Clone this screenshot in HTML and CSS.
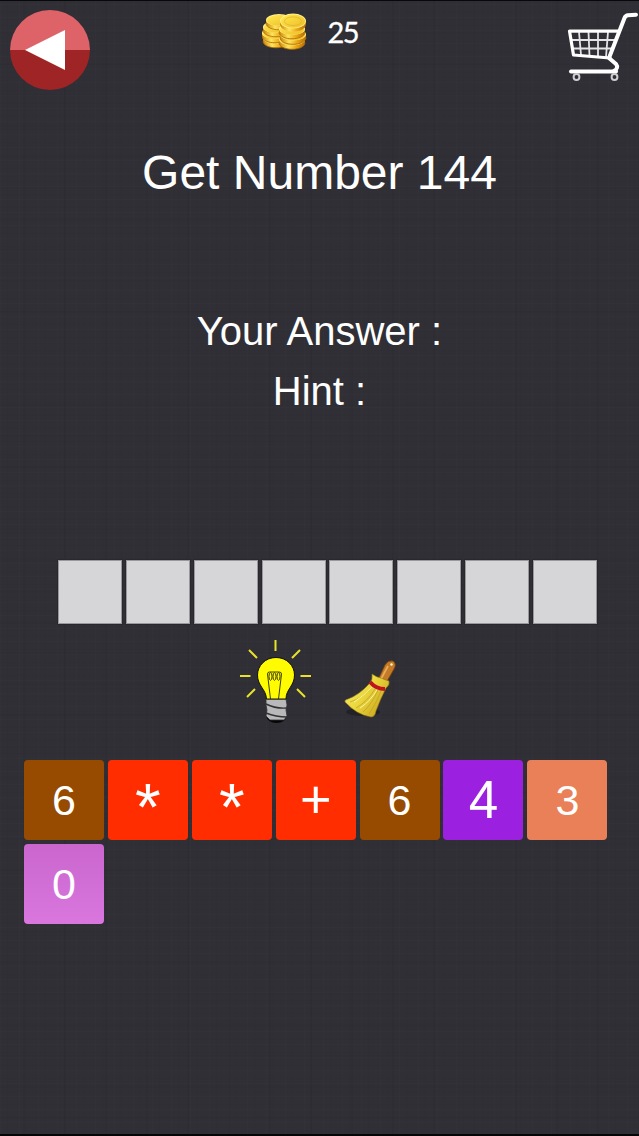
FILE: index.html
```html
<!DOCTYPE html>
<html lang="en">
  <head>
    <meta charset="UTF-8" />
    <meta name="viewport" content="width=device-width, initial-scale=1.0" />
    <title>Get Number</title>

    <link rel="stylesheet" href="styles.css">
  </head>

  <body>
    <div class="top">
      <svg class="back" viewBox="0 0 80 80">
        <path d="M0 40a40 40 0 0 1 80 0z" fill="#dd6368" />
        <path d="M0 40a40 40 0 0 0 80 0z" fill="#9f2426" />
        <path d="M15 40L55 20V60z" fill="#fff" />
      </svg>
      <div class="coins">
        <svg width="46" height="38" viewBox="0 0 46 38">
          <defs>
            <linearGradient id="edge">
              <stop offset="0" stop-color="#c98208" />
              <stop offset=".35" stop-color="#ffe45c" />
              <stop offset=".65" stop-color="#eba817" />
              <stop offset="1" stop-color="#b86c05" />
            </linearGradient>
            <linearGradient id="face" x2="1" y2="1">
              <stop offset="0" stop-color="#ffe94e" />
              <stop offset="1" stop-color="#edbc27" />
            </linearGradient>
            <g id="coin">
              <path d="M0 6v3c0 9 26 9 26 0v-3z" fill="url(#edge)" />
              <path d="M0 9c0 9 26 9 26 0" fill="none" stroke="#a96808" stroke-width=".8" />
              <ellipse cx="13" cy="6" rx="13" ry="6" fill="#fff08a" />
              <ellipse cx="13" cy="6.400" rx="12" ry="5.300" fill="url(#face)" />
            </g>
          </defs>
          <use href="#coin" x="1" y="19" />
          <use href="#coin" x="0" y="14" />
          <use href="#coin" x="1" y="8" />
          <use href="#coin" x="4" y="1" />
          <use href="#coin" x="17" y="20.500" />
          <use href="#coin" x="18" y="15.500" />
          <use href="#coin" x="17" y="10" />
          <g transform="translate(18 0)">
            <path d="M0 8v3c0 10 26 10 26 0v-3z" fill="url(#edge)" />
            <ellipse cx="13" cy="8" rx="13" ry="7.500" fill="#fff08a" />
            <ellipse cx="13" cy="8.200" rx="12" ry="6.600" fill="url(#face)" />
            <ellipse cx="13" cy="8.200" rx="8.500" ry="4.300" fill="none" stroke="#e4b528" stroke-width=".8" />
          </g>
        </svg>
        <span id="text-coin">25</span>
      </div>
      <svg class="cart" viewBox="0 0 74 70" fill="none" stroke="#fff">
        <path d="M4 19.500H54M5 28H51M6 36.500H48M14 20l2 23M23.500 20l1 24M33 20v24M43 20l-2 25" stroke-width="1.800" stroke="#e4e4e6" />
        <path d="M53 19H4.500L8.500 43L45 46" stroke-width="3.200" stroke-linejoin="round" stroke-linecap="round" />
        <path d="M44 46L59.500 6Q60.500 3.500 63 3.300L71 2.700M44 46L51 52Q54 56 49 59" stroke-width="4" stroke-linecap="round" stroke-linejoin="round" />
        <path d="M6 59.500H51" stroke-width="4" stroke-linecap="round" />
        <circle cx="11.500" cy="65" r="2.900" stroke-width="2" stroke="#cfcfd2" />
        <circle cx="49.500" cy="65" r="2.900" stroke-width="2" stroke="#cfcfd2" />
      </svg>
    </div>

    <h1>Get Number 144</h1>
    <div class="info">
      <p>Your Answer :</p>
      <p>Hint :</p>
    </div>

    <div class="slots">
      <div class="slot"></div>
      <div class="slot"></div>
      <div class="slot"></div>
      <div class="slot"></div>
      <div class="slot"></div>
      <div class="slot"></div>
      <div class="slot"></div>
      <div class="slot"></div>
    </div>

    <div class="tools">
      <svg class="bulb" viewBox="0 0 72 84">
        <path d="M35.500 0v11M9 10l8 8M60 10l-8 8M0 36h10.500M60.500 36h10.500M7 57l8-8M57 49l8 8" stroke="#e8e32a" stroke-width="2" />
        <path d="M26 76h21q-2 7-10.500 7T26 76z" fill="#050505" />
        <path d="M26 59h20l1 6-1 5 1 6-3 4H30l-4-4 1-6-1-5z" fill="#b9b9bb" stroke="#333" stroke-width=".8" />
        <path d="M26 64q10 5 21 4M26 73q10 4 21 4" fill="none" stroke="#333" stroke-width="1.400" />
        <path d="M36 17.500C25 17.500 17.500 26 17.500 35C17.500 46 26 49 26.500 59H46C46 49 54.500 46 54.500 35C54.500 26 47 17.500 36 17.500z" fill="#fffb00" stroke="#11110c" stroke-width="1" />
        <g fill="none" stroke="#292900" stroke-width=".9">
          <path d="M30.500 59L27.500 34Q27.500 32 29.500 32H39Q41.500 32 41.500 34L38.500 59" />
          <ellipse cx="30.500" cy="36.500" rx="1.500" ry="3.800" />
          <ellipse cx="34.500" cy="36.500" rx="1.500" ry="3.800" />
          <ellipse cx="38.500" cy="36.500" rx="1.500" ry="3.800" />
        </g>
      </svg>
      <svg class="broom" viewBox="0 0 52 58">
        <defs>
          <linearGradient id="straw" x1="0" y1="0" x2="1" y2=".7">
            <stop offset="0" stop-color="#f6ec7c" />
            <stop offset=".5" stop-color="#ecd93f" />
            <stop offset="1" stop-color="#c9a41c" />
          </linearGradient>
        </defs>
        <ellipse cx="19" cy="52" rx="17" ry="4" fill="#222126" />
        <path d="M34 20L41 5Q44 0 49 1Q53 4 50 9L42 23z" fill="#c47a27" stroke="#80450d" stroke-width=".8" />
        <path d="M37 19L44 6" stroke="#e8ac5a" stroke-width="1.800" />
        <circle cx="47.500" cy="4.500" r="1.200" fill="#fff1d0" />
        <path d="M28 14Q32 17 37 18Q41 20 45 21Q46 25 42 28Q36 40 32 51Q31 57 27 57Q13 55 1 42Q0 40 4 39Q15 35 25 24Q29 20 28 14z" fill="url(#straw)" stroke="#8b7411" stroke-width=".6" />
        <path d="M28 27Q19 38 6 42M31 29Q23 42 12 48M34 30Q28 44 19 52M37 31Q32 44 25 54" fill="none" stroke="#c2a526" stroke-width=".8" />
        <path d="M30 25Q20 36 10 42M34 28Q27 41 16 48" fill="none" stroke="#fff4a1" />
        <path d="M26 22Q32 29 41 29" fill="none" stroke="#bf1420" stroke-width="4" />
      </svg>
    </div>

    <div class="keys">
      <div class="key brown">6</div>
      <div class="key red star"><span>*</span></div>
      <div class="key red star"><span>*</span></div>
      <div class="key red plus"><span>+</span></div>
      <div class="key brown">6</div>
      <div class="key purple">4</div>
      <div class="key orange">3</div>
      <div class="key pink">0</div>
    </div>
  </body>
</html>
```
FILE: styles.css
```css
* {
  box-sizing: border-box;
}

body {
  margin: 0;
  height: 1136px;
  overflow: hidden;
  border-top: 1px solid #08080a;
  border-bottom: 2px solid #050506;
  background-color: #302f36;
  /* woven cloth */
  background-image:
    repeating-linear-gradient(0deg, rgba(255, 255, 255, 0.012) 0 1px, transparent 1px 5px, rgba(0, 0, 0, 0.03) 5px 6px, transparent 6px 13px),
    repeating-linear-gradient(0deg, transparent 0 17px, rgba(0, 0, 0, 0.03) 17px 19px, transparent 19px 31px),
    repeating-linear-gradient(90deg, rgba(255, 255, 255, 0.01) 0 1px, transparent 1px 7px, rgba(0, 0, 0, 0.025) 7px 8px, transparent 8px 19px),
    repeating-linear-gradient(90deg, transparent 0 23px, rgba(0, 0, 0, 0.04) 23px 25px, transparent 25px 41px);
  color: #fff;
  font-family: "Liberation Sans", Arial, sans-serif;
}

svg {
  display: block;
}

.top {
  display: flex;
  justify-content: space-between;
  height: 100px;
  padding: 9px 0 0 10px;
}

.back {
  width: 80px;
  height: 80px;
}

.coins {
  display: flex;
  gap: 20px;
  width: 140px;
  padding: 3px 0 0 4px;
}

#text-coin {
  font-family: Lato, sans-serif;
  font-size: 29px;
  line-height: 37px;
  letter-spacing: -1.5px;
  -webkit-text-stroke: 0.3px #fff;
}

.cart {
  width: 74px;
  height: 70px;
  margin-top: 2px;
}

h1 {
  margin: 44px 0 0;
  font-size: 48px;
  font-weight: normal;
  line-height: 56px;
  text-align: center;
}

.info {
  margin-top: 100px;
  font-size: 40px;
  line-height: 60px;
  text-align: center;
}

.info p {
  margin: 0;
}

.slots {
  display: flex;
  gap: 3.85px;
  margin: 139px 0 0 58px;
}

.slot {
  width: 64px;
  height: 64px;
  border: 1px solid #99999c;
  background: #d6d6d8;
  box-shadow: 0 0 0 1px #29292d;
}

.tools {
  display: flex;
  gap: 32px;
  height: 136px;
  padding: 16px 0 0 240px;
}

.bulb {
  width: 72px;
  height: 84px;
}

.broom {
  width: 52px;
  height: 58px;
  margin-top: 20px;
}

.keys {
  display: grid;
  grid-template-columns: repeat(7, 80px);
  gap: 3.9px;
  margin-left: 24px;
}

.key {
  height: 80px;
  border-radius: 4px;
  font-size: 43px;
  line-height: 80px;
  text-align: center;
}

.brown {
  background: #964b00;
}

.red {
  background: #ff2d00;
}

.purple {
  background: #9b20e0;
  font-size: 53px;
}

.orange {
  background: #ea8058;
}

.pink {
  background: linear-gradient(#ca66ce, #d977de);
}

.star {
  font-size: 66px;
  line-height: 95px;
}

.plus {
  font-size: 54px;
  line-height: 79px;
}
```
